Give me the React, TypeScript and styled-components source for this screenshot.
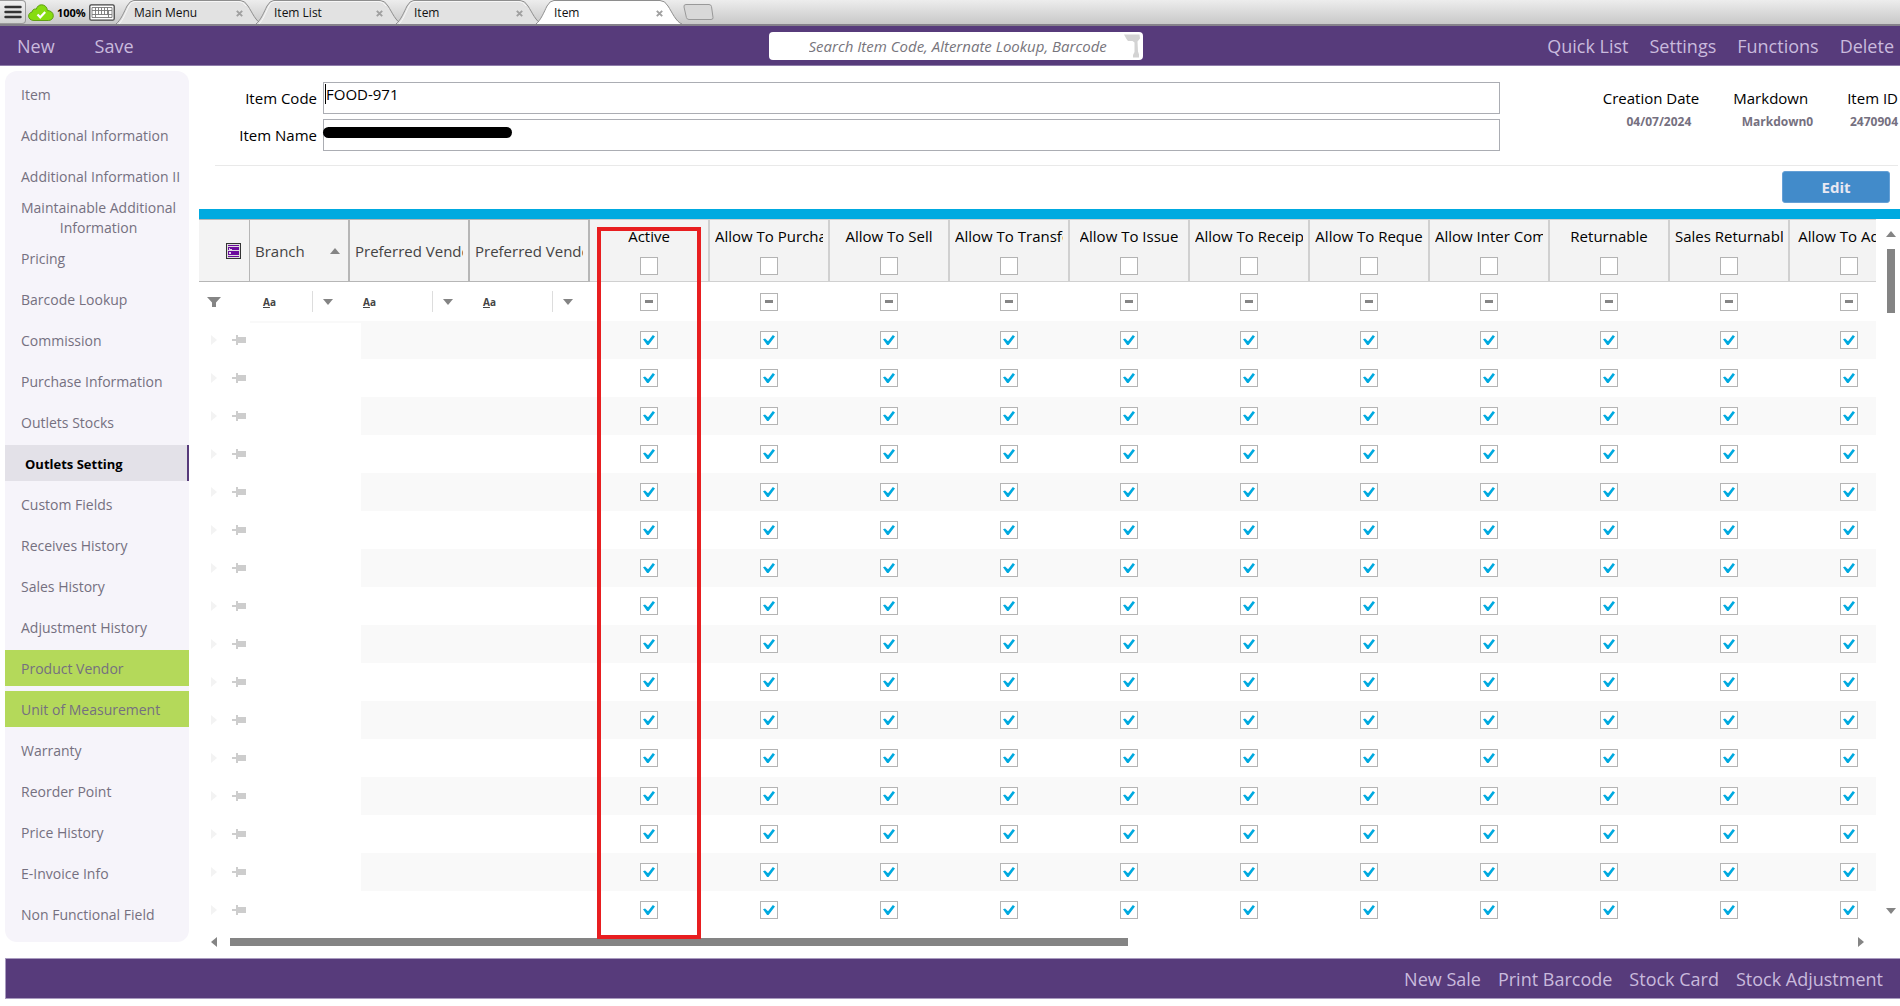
import React, { useState } from "react";
import styled, { createGlobalStyle, css } from "styled-components";

const colors = {
  purple: "#573b7b",
  purpleEdge: "#8f7daa",
  lilac: "#c9badd",
  cyan: "#00aae0",
  grey: "#848484",
  red: "#e81e20",
};

const GlobalStyle = createGlobalStyle`
  *, *::before, *::after { box-sizing: border-box; }
  body {
    margin: 0;
    background: #fff;
    color: #000;
    font-family: "Segoe UI", "Open Sans", "Noto Sans", sans-serif;
    font-size: 15px;
    line-height: 20px;
  }
  button, input { font: inherit; color: inherit; }
  button { padding: 0; border: 0; background: none; cursor: pointer; }
`;

const Page = styled.div`
  display: flex;
  flex-direction: column;
  min-height: 100vh;
  overflow: hidden;
`;

/* ---------- Tab strip ---------- */

const TabStrip = styled.div`
  display: flex;
  height: 26px;
  border-bottom: 2px solid #85818a;
  background: linear-gradient(#ededed, #c8c8c8);
`;

const MenuButton = styled.button`
  display: flex;
  align-items: center;
  justify-content: center;
  width: 26px;
  height: 24px;
  border: 1px solid #9b9b9b;
  border-left: 0;
  border-radius: 0 4px 4px 0;
  background: linear-gradient(#f1f1f1, #d2d2d2);
`;

const Status = styled.div`
  display: flex;
  align-items: center;
  gap: 3px;
  width: 90px;
  padding: 1px 0 0 2px;
  font-size: 11px;
  font-weight: 700;
`;

const StatusIcon = styled.svg`
  flex: none;
`;

const TabList = styled.nav`
  display: flex;
`;

const TabItem = styled.div<{ $active?: boolean }>`
  position: relative;
  z-index: ${(p) => (p.$active ? 1 : 0)};
  display: flex;
  align-items: center;
  justify-content: space-between;
  width: 146px;
  height: 24px;
  margin-right: -6px;
  padding: 2px 19px 0 18px;
  font-size: 12px;
`;

const TabShape = styled.svg`
  position: absolute;
  inset: 0;
  z-index: -1;
`;

const TabLabel = styled.a`
  color: #111;
  text-decoration: none;
`;

const TabClose = styled.button`
  display: flex;
  align-items: center;
  height: 16px;
`;

const NewTab = styled.button`
  align-self: center;
  height: 17px;
  margin-left: 7px;
`;

/* ---------- Purple bars ---------- */

const Header = styled.header`
  display: grid;
  grid-template-columns: 1fr minmax(200px, 374px) 1fr;
  align-items: center;
  height: 40px;
  padding: 0 6px 0 17px;
  background: ${colors.purple};
  border-bottom: 1px solid ${colors.purpleEdge};
`;

const Actions = styled.nav<{ $end?: boolean; $gap: number }>`
  display: flex;
  gap: ${(p) => p.$gap}px;
  justify-content: ${(p) => (p.$end ? "flex-end" : "flex-start")};
`;

const Action = styled.button`
  color: ${colors.lilac};
  font-size: 18px;
  line-height: 24px;
  white-space: nowrap;
`;

const SearchBox = styled.label`
  display: flex;
  align-items: center;
  height: 28px;
  padding-right: 2px;
  border-radius: 4px;
  background: #fff;
`;

const SearchInput = styled.input`
  flex: 1;
  min-width: 0;
  height: 28px;
  padding: 0 0 0 40px;
  border: 0;
  outline: 0;
  background: none;
  font-size: 15px;
  font-style: italic;
  &::placeholder { color: #77757c; opacity: 1; }
`;

const Footer = styled.footer`
  display: flex;
  align-items: center;
  justify-content: flex-end;
  height: 41px;
  margin-left: 5px;
  padding-right: 17px;
  background: ${colors.purple};
  border: 1px solid #a99bbf;
  border-right: 0;
`;

/* ---------- Body ---------- */

const Body = styled.div`
  display: flex;
  align-items: flex-start;
  gap: 10px;
  padding: 5px 0 3px 5px;
`;

const Sidebar = styled.nav`
  flex: none;
  display: flex;
  flex-direction: column;
  gap: 5px;
  width: 184px;
  margin-bottom: 13px;
  padding: 5px 0 10px;
  border-radius: 12px;
  background: #f6f4fa;
`;

const SideLink = styled.a<{ $kind?: "selected" | "marked" }>`
  display: flex;
  align-items: center;
  height: 36px;
  padding: 2px 0 0 16px;
  color: #757080;
  font-size: 14px;
  text-decoration: none;
  white-space: nowrap;
  ${(p) =>
    p.$kind === "marked" &&
    css`
      background: #b4d95a;
    `}
  ${(p) =>
    p.$kind === "selected" &&
    css`
      padding-left: 20px;
      border-right: 2px solid ${colors.purple};
      background: #e3e1e8;
      color: #000;
      font-size: 13px;
      font-weight: 700;
    `}
`;

const TwoLines = styled.span`
  text-align: center;
`;

const Main = styled.main`
  flex: 1;
  min-width: 0;
`;

const ItemForm = styled.section`
  display: flex;
  align-items: flex-start;
  height: 95px;
  margin: 0 2px 0 16px;
  padding-top: 11px;
  border-bottom: 1px solid #e9e9e9;
`;

const Fields = styled.div`
  flex: 1;
  display: grid;
  grid-template-columns: 102px 1fr;
  column-gap: 6px;
  row-gap: 5px;
  align-items: center;
`;

const FieldLabel = styled.label`
  text-align: right;
`;

const FieldBox = styled.div`
  position: relative;
`;

const FieldInput = styled.input`
  display: block;
  width: 100%;
  height: 32px;
  padding: 0 2px 8px;
  border: 1px solid #abadb3;
  outline: 0;
  background: #fff;
`;

const Caret = styled.span`
  position: absolute;
  left: 2px;
  top: 2px;
  width: 1px;
  height: 20px;
  background: #000;
`;

const Redaction = styled.span`
  position: absolute;
  left: 0;
  top: 8px;
  width: 189px;
  height: 11px;
  border-radius: 6px;
  background: #000;
`;

const Facts = styled.dl`
  display: flex;
  flex: none;
  justify-content: flex-end;
  gap: 34px;
  width: 398px;
  margin: 0;
  padding-top: 6px;
`;

const Fact = styled.div`
  text-align: right;
`;

const FactName = styled.dt<{ $inset?: number }>`
  padding-right: ${(p) => p.$inset ?? 0}px;
`;

const FactValue = styled.dd<{ $inset?: number }>`
  margin: 4px 0 0;
  padding-right: ${(p) => p.$inset ?? 0}px;
  color: #757080;
  font-size: 12px;
  font-weight: 700;
`;

const EditRow = styled.div`
  display: flex;
  justify-content: flex-end;
  padding: 5px 10px 6px 0;
`;

const EditButton = styled.button`
  width: 108px;
  height: 32px;
  border: 1px solid #65a0d6;
  border-radius: 3px;
  background: #428bca;
  color: #e8e8f2;
  font-weight: 700;
`;

/* ---------- Grid ---------- */

const GridBar = styled.div`
  height: 10px;
  background: ${colors.cyan};
`;

const GridArea = styled.div`
  display: grid;
  grid-template-columns: minmax(0, 1fr) 24px;
`;

const GridView = styled.div`
  position: relative;
  overflow: hidden;
`;

const Table = styled.table`
  width: 1711px;
  table-layout: fixed;
  border-collapse: separate;
  border-spacing: 0;
`;

const Col = styled.col<{ $w: number }>`
  width: ${(p) => p.$w}px;
`;

const HeadCell = styled.th<{ $flag?: boolean; $narrow?: boolean }>`
  height: 63px;
  padding: 0 5px;
  overflow: hidden;
  background: #f3f3f3;
  border: solid ${(p) => (p.$flag ? "#d0d0d0" : "#b6b6b6")};
  border-width: 1px ${(p) => (p.$narrow ? 1 : 2)}px 1px 0;
  color: ${(p) => (p.$flag ? "#000" : "#444")};
  font-weight: 400;
  text-align: left;
  white-space: nowrap;
`;

const HeadText = styled.span`
  display: block;
  overflow: hidden;
`;

const HeadSort = styled.span`
  display: flex;
  align-items: center;
  justify-content: space-between;
  padding-right: 3px;
`;

const HeadFlag = styled.label`
  display: flex;
  flex-direction: column;
  align-items: center;
  gap: 11px;
`;

const HeadFlagText = styled.span`
  max-width: 100%;
  overflow: hidden;
`;

const HeadIcon = styled.span`
  display: flex;
  justify-content: flex-end;
  padding-right: 3px;
`;

const Cell = styled.td`
  height: 38px;
  padding: 0;
  overflow: hidden;
`;

const FilterCell = styled(Cell)`
  height: 39px;
`;

const Row = styled.tr<{ $band?: boolean }>`
  ${Cell}:not(:first-child) {
    background: ${(p) => (p.$band ? "#f9f9f9" : "#fff")};
  }
`;

const CellCenter = styled.span`
  display: flex;
  align-items: center;
  justify-content: center;
  padding-right: 2px;
`;

const RowMarks = styled.span`
  display: flex;
  align-items: center;
  justify-content: space-between;
  padding: 0 4px 0 12px;
`;

const FunnelMark = styled.span`
  display: flex;
  padding-left: 8px;
`;

const TextFilter = styled.span`
  display: flex;
  align-items: center;
  justify-content: space-between;
  padding-left: 13px;
  font-size: 10px;
  font-weight: 700;
  color: #444;
`;

const FilterMore = styled.button`
  display: flex;
  align-items: center;
  width: 38px;
  height: 21px;
  padding-left: 10px;
  border-left: 1px solid #ddd;
`;

const Check = styled.input<{ $partial?: boolean }>`
  appearance: none;
  display: grid;
  place-items: center;
  width: 18px;
  height: 18px;
  margin: 0;
  border: 1px solid #b4b4b4;
  background: #fff;
  &:checked::before {
    content: "";
    width: 12px;
    height: 10px;
    background: ${colors.cyan};
    clip-path: polygon(0 42%, 17% 36%, 42% 62%, 82% 0, 100% 14%, 46% 100%, 34% 100%);
  }
  ${(p) =>
    p.$partial &&
    css`
      &::before {
        content: "";
        width: 8px;
        height: 3px;
        background: #858585;
      }
    `}
`;

const BranchMask = styled.div`
  position: absolute;
  left: 50px;
  top: 104px;
  bottom: 0;
  width: 112px;
  background: #fff;
`;

const Highlight = styled.div`
  position: absolute;
  left: 398px;
  top: 8px;
  bottom: -10px;
  width: 104px;
  border: 4px solid ${colors.red};
  pointer-events: none;
  z-index: 2;
`;

const GridFrame = styled.div`
  position: relative;
`;

const VerticalScroll = styled.div`
  display: flex;
  flex-direction: column;
  align-items: center;
  padding: 12px 0 15px 6px;
`;

const VerticalTrack = styled.div`
  flex: 1;
  padding-top: 12px;
`;

const VerticalThumb = styled.div`
  width: 8px;
  height: 64px;
  background: ${colors.grey};
`;

const HorizontalScroll = styled.div`
  display: flex;
  align-items: center;
  gap: 13px;
  height: 26px;
  padding: 0 36px 0 12px;
`;

const HorizontalTrack = styled.div`
  flex: 1;
  padding-right: 12px;
`;

const HorizontalThumb = styled.div`
  width: 56%;
  height: 8px;
  background: ${colors.grey};
`;

const ScrollButton = styled.button`
  display: flex;
`;

/* ---------- Drawings ---------- */

const arrows = {
  up: { w: 10, h: 6, d: "M0 6 5 0l5 6z" },
  down: { w: 10, h: 6, d: "M0 0h10L5 6z" },
  left: { w: 6, h: 10, d: "M6 0v10L0 5z" },
  right: { w: 6, h: 10, d: "M0 0v10l6-5z" },
};

function Arrow({ dir, color = colors.grey }: { dir: keyof typeof arrows; color?: string }) {
  const a = arrows[dir];
  return (
    <svg width={a.w} height={a.h} viewBox={`0 0 ${a.w} ${a.h}`} aria-hidden="true">
      <path d={a.d} fill={color} />
    </svg>
  );
}

function Cloud() {
  return (
    <StatusIcon width="26" height="18" viewBox="0 0 26 18" aria-hidden="true">
      <path
        d="M6 16.5C2.800 16.500.6 14.600.6 12.100c0-2.200 1.500-3.700 3.500-4.100C4.300 6.200 5.600 5 7.300 5c.4 0 .7 0 1 .1C9.200 2.400 11 .8 13.500.8c3.300 0 5.700 2.400 5.900 5.700 3.200.1 5.900 2 5.900 5.200 0 2.900-2.200 4.800-5 4.800z"
        fill="#86dc10"
        stroke="#5f9e14"
        strokeWidth="1"
      />
      <path d="m9.500 10.500 2.700 2.800 5-5.300" fill="none" stroke="#fff" strokeWidth="2.200" />
    </StatusIcon>
  );
}

function Keyboard() {
  return (
    <StatusIcon width="26" height="17" viewBox="0 0 26 17" aria-hidden="true">
      <rect x=".8" y=".8" width="24.400" height="15.400" rx="1.500" fill="#fff" stroke="#444" strokeWidth="1.300" />
      <path
        d="M3 3.500h20v10H3zM3 6.500h20M3 10.500h20M6.500 3.500v7M9.500 3.500v7M12.500 3.500v7M15.500 3.500v7M18.500 3.500v7M6.500 10.500v3M19.500 6.500v7"
        fill="none"
        stroke="#777"
        strokeWidth=".9"
      />
    </StatusIcon>
  );
}

function ScannerGun() {
  return (
    <svg width="17" height="24" viewBox="0 0 17 24" aria-hidden="true">
      <path d="M0 .5h15.500l.5 4-2.500 3 .5 10 1 3v3H9v-2.500l1.500-3V8.500L8.500 7H4L2.500 5z" fill="#d3d3d3" />
    </svg>
  );
}

function LayoutIcon() {
  return (
    <svg width="15" height="16" viewBox="0 0 15 16" aria-hidden="true">
      <rect x=".5" y=".5" width="14" height="15" fill="#ddd" stroke="#333" />
      <path d="M2 2h11v1H2zM2 4h11v3H2zM2 8h11v4H2zM2 13h11v1H2z" fill="#6b0a9c" />
      <path d="M3 5h1v1h2v1H3zM3 9h2v2H3z" fill="#e2d0ee" />
    </svg>
  );
}

function Pin() {
  return (
    <svg width="14" height="10" viewBox="0 0 14 10" aria-hidden="true">
      <path d="M0 4h4V0h2v2h8v6H6v2H4V6H0z" fill="#cdcdcd" />
    </svg>
  );
}

function Funnel() {
  return (
    <svg width="14" height="10" viewBox="0 0 14 10" aria-hidden="true">
      <path d="M0 0h14L9 5.500V10H5V5.500z" fill="#858585" />
    </svg>
  );
}

function Cross() {
  return (
    <svg width="7" height="7" viewBox="0 0 7 7" aria-hidden="true">
      <path d="m.8.8 5.400 5.400M6.200.8.8 6.200" stroke="#a0a0a0" strokeWidth="1.900" />
    </svg>
  );
}

/* ---------- Data ---------- */

const tabs = ["Main Menu", "Item List", "Item", "Item"];

const sections: { label: string; kind?: "selected" | "marked" }[] = [
  { label: "Item" },
  { label: "Additional Information" },
  { label: "Additional Information II" },
  { label: "Maintainable Additional\nInformation" },
  { label: "Pricing" },
  { label: "Barcode Lookup" },
  { label: "Commission" },
  { label: "Purchase Information" },
  { label: "Outlets Stocks" },
  { label: "Outlets Setting", kind: "selected" },
  { label: "Custom Fields" },
  { label: "Receives History" },
  { label: "Sales History" },
  { label: "Adjustment History" },
  { label: "Product Vendor", kind: "marked" },
  { label: "Unit of Measurement", kind: "marked" },
  { label: "Warranty" },
  { label: "Reorder Point" },
  { label: "Price History" },
  { label: "E-Invoice Info" },
  { label: "Non Functional Field" },
];

const textColumns = ["Branch", "Preferred Vendo", "Preferred Vendo"];

const flagColumns = [
  "Active",
  "Allow To Purcha",
  "Allow To Sell",
  "Allow To Transfe",
  "Allow To Issue",
  "Allow To Receip",
  "Allow To Reque",
  "Allow Inter Com",
  "Returnable",
  "Sales Returnabl",
  "Allow To Adjus",
];

const rowIds = Array.from({ length: 16 }, (_, i) => i);

function OutletRow({ index }: { index: number }) {
  const [flags, setFlags] = useState(() => flagColumns.map(() => true));
  const toggle = (at: number) => setFlags((now) => now.map((v, i) => (i === at ? !v : v)));
  return (
    <Row $band={index % 2 === 0}>
      <Cell>
        <RowMarks>
          <Arrow dir="right" color="#f3f3f3" />
          <Pin />
        </RowMarks>
      </Cell>
      {textColumns.map((_, i) => (
        <Cell key={i} />
      ))}
      {flags.map((on, i) => (
        <Cell key={i}>
          <CellCenter>
            <Check
              type="checkbox"
              aria-label={`${flagColumns[i]}, row ${index + 1}`}
              checked={on}
              onChange={() => toggle(i)}
            />
          </CellCenter>
        </Cell>
      ))}
    </Row>
  );
}

function OutletGrid() {
  return (
    <section>
      <GridBar />
      <GridFrame>
        <GridArea>
          <GridView>
            <Table>
              <colgroup>
                <Col $w={51} />
                <Col $w={100} />
                <Col $w={120} />
                <Col $w={120} />
                {flagColumns.map((name) => (
                  <Col key={name} $w={120} />
                ))}
              </colgroup>
              <thead>
                <tr>
                  <HeadCell $narrow>
                    <HeadIcon>
                      <LayoutIcon />
                    </HeadIcon>
                  </HeadCell>
                  {textColumns.map((name, i) => (
                    <HeadCell key={i}>
                      {i === 0 ? (
                        <HeadSort>
                          {name}
                          <Arrow dir="up" />
                        </HeadSort>
                      ) : (
                        <HeadText>{name}</HeadText>
                      )}
                    </HeadCell>
                  ))}
                  {flagColumns.map((name) => (
                    <HeadCell key={name} $flag>
                      <HeadFlag>
                        <HeadFlagText>{name}</HeadFlagText>
                        <Check type="checkbox" />
                      </HeadFlag>
                    </HeadCell>
                  ))}
                </tr>
              </thead>
              <tbody>
                <tr>
                  <FilterCell>
                    <FunnelMark>
                      <Funnel />
                    </FunnelMark>
                  </FilterCell>
                  {textColumns.map((name, i) => (
                    <FilterCell key={i}>
                      <TextFilter>
                        <span>
                          <u>A</u>a
                        </span>
                        <FilterMore aria-label={`Filter ${name}`}>
                          <Arrow dir="down" />
                        </FilterMore>
                      </TextFilter>
                    </FilterCell>
                  ))}
                  {flagColumns.map((name) => (
                    <FilterCell key={name}>
                      <CellCenter>
                        <Check type="checkbox" $partial aria-label={`Filter ${name}`} />
                      </CellCenter>
                    </FilterCell>
                  ))}
                </tr>
                {rowIds.map((i) => (
                  <OutletRow key={i} index={i} />
                ))}
              </tbody>
            </Table>
            <BranchMask />
          </GridView>
          <VerticalScroll>
            <ScrollButton aria-label="Scroll up">
              <Arrow dir="up" />
            </ScrollButton>
            <VerticalTrack>
              <VerticalThumb />
            </VerticalTrack>
            <ScrollButton aria-label="Scroll down">
              <Arrow dir="down" />
            </ScrollButton>
          </VerticalScroll>
        </GridArea>
        <Highlight />
      </GridFrame>
      <HorizontalScroll>
        <ScrollButton aria-label="Scroll left">
          <Arrow dir="left" />
        </ScrollButton>
        <HorizontalTrack>
          <HorizontalThumb />
        </HorizontalTrack>
        <ScrollButton aria-label="Scroll right">
          <Arrow dir="right" />
        </ScrollButton>
      </HorizontalScroll>
    </section>
  );
}

export default function App() {
  const [code, setCode] = useState("FOOD-971");
  const [name, setName] = useState("");
  return (
    <Page>
      <GlobalStyle />
      <TabStrip>
        <MenuButton aria-label="Menu">
          <svg width="18" height="14" viewBox="0 0 18 14" aria-hidden="true">
            <path d="M1.500 2h15M1.500 7h15M1.500 12h15" stroke="#333" strokeWidth="2.400" strokeLinecap="round" />
          </svg>
        </MenuButton>
        <Status>
          <Cloud />
          <span>100%</span>
          <Keyboard />
        </Status>
        <TabList>
          {tabs.map((label, i) => {
            const active = i === tabs.length - 1;
            return (
              <TabItem key={i} $active={active}>
                <TabShape width="146" height="24" viewBox="0 0 146 24" aria-hidden="true">
                  <path
                    d="M0 24C5 20 8 12 11 6Q14 .5 18 .5H124Q129 .5 132 6C136 12 140 22 146 24"
                    fill={active ? "#fff" : "#e2e2e2"}
                    stroke="#8e8e8e"
                  />
                  {!active && (
                    <path d="M3 24C7 20 10 12 13 6Q15 1.500 19 1.500H123Q127 1.500 130 6" fill="none" stroke="#f7f7f7" />
                  )}
                </TabShape>
                <TabLabel href="#">{label}</TabLabel>
                <TabClose aria-label={`Close ${label}`}>
                  <Cross />
                </TabClose>
              </TabItem>
            );
          })}
        </TabList>
        <NewTab aria-label="New tab">
          <svg width="31" height="17" viewBox="0 0 31 17" aria-hidden="true">
            <path
              d="M3 .5h23q2 0 2.500 2l1.500 11q.3 2-2 2H6q-2 0-2.600-2L1 3Q.5.500 3 .5z"
              fill="#d8d8d8"
              stroke="#999"
            />
          </svg>
        </NewTab>
      </TabStrip>

      <Header>
        <Actions $gap={40}>
          <Action>New</Action>
          <Action>Save</Action>
        </Actions>
        <SearchBox>
          <SearchInput
            type="search"
            aria-label="Search items"
            placeholder="Search Item Code, Alternate Lookup, Barcode"
          />
          <ScannerGun />
        </SearchBox>
        <Actions $end $gap={21}>
          <Action>Quick List</Action>
          <Action>Settings</Action>
          <Action>Functions</Action>
          <Action>Delete</Action>
        </Actions>
      </Header>

      <Body>
        <Sidebar>
          {sections.map((s) => {
            const lines = s.label.split("\n");
            return (
              <SideLink key={s.label} href="#" $kind={s.kind}>
                {lines.length > 1 ? (
                  <TwoLines>
                    {lines[0]}
                    <br />
                    {lines[1]}
                  </TwoLines>
                ) : (
                  s.label
                )}
              </SideLink>
            );
          })}
        </Sidebar>

        <Main>
          <ItemForm>
            <Fields>
              <FieldLabel htmlFor="item-code">Item Code</FieldLabel>
              <FieldBox>
                <FieldInput id="item-code" value={code} onChange={(e) => setCode(e.target.value)} />
                <Caret />
              </FieldBox>
              <FieldLabel htmlFor="item-name">Item Name</FieldLabel>
              <FieldBox>
                <FieldInput id="item-name" value={name} onChange={(e) => setName(e.target.value)} />
                <Redaction />
              </FieldBox>
            </Fields>
            <Facts>
              <Fact>
                <FactName>Creation Date</FactName>
                <FactValue $inset={8}>04/07/2024</FactValue>
              </Fact>
              <Fact>
                <FactName $inset={5}>Markdown</FactName>
                <FactValue>Markdown0</FactValue>
              </Fact>
              <Fact>
                <FactName>Item ID</FactName>
                <FactValue>2470904</FactValue>
              </Fact>
            </Facts>
          </ItemForm>
          <EditRow>
            <EditButton>Edit</EditButton>
          </EditRow>
          <OutletGrid />
        </Main>
      </Body>

      <Footer>
        <Actions $end $gap={17}>
          <Action>New Sale</Action>
          <Action>Print Barcode</Action>
          <Action>Stock Card</Action>
          <Action>Stock Adjustment</Action>
        </Actions>
      </Footer>
    </Page>
  );
}
